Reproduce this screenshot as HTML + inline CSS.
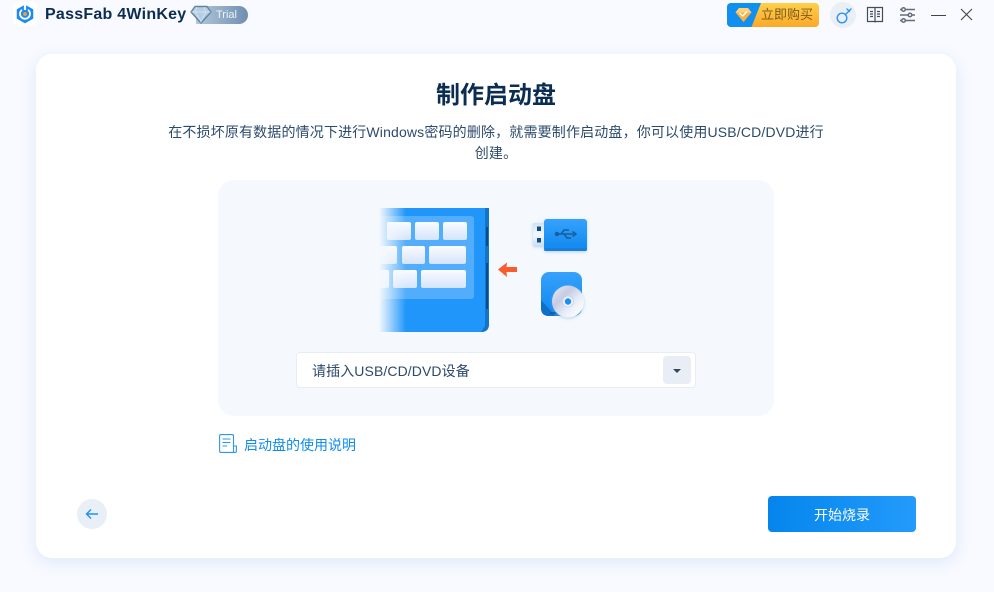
<!DOCTYPE html>
<html lang="zh"><head><meta charset="utf-8"><style>
*{box-sizing:border-box}html,body{margin:0;padding:0}
body{width:994px;height:592px;background:#f8faff;position:relative;overflow:hidden;font-family:"Liberation Sans","Noto Sans CJK SC",sans-serif}
.a{position:absolute;white-space:nowrap}
</style></head><body>
<svg class="a" style="left:13px;top:2px" width="24" height="24" viewBox="0 0 24 24"><rect x="0" y="0" width="24" height="24" rx="5" fill="#fff"/><path d="M12 3.500 19.500 7.800V16.200L12 20.500 4.500 16.200V7.800Z" fill="#1a8cf0" stroke="#1a8cf0" stroke-width="1.500" stroke-linejoin="round"/><path d="M9 7.800A5 5 0 1 0 15 7.800" fill="none" stroke="#fff" stroke-width="1.800"/><path d="M12 3V8" stroke="#fff" stroke-width="2.200"/><circle cx="12" cy="12" r="1.900" fill="#f7a132"/></svg>
<div class="a" style="left:45px;top:5px;font-size:16px;line-height:20px;font-weight:700;color:#0b2d52;letter-spacing:.25px">PassFab 4WinKey</div>
<div class="a" style="left:196px;top:6px;width:52px;height:18px;border-radius:0 9px 9px 0;background:linear-gradient(90deg,#b4c8da,#6f8fb0);color:#eef3f8;font-size:11px;line-height:19px;padding-left:20px">Trial</div>
<svg class="a" style="left:190px;top:5px" width="22" height="19" viewBox="0 0 22 19"><path d="M5 1.500H17L21 7 11 18 1 7Z" fill="#b5cee2" stroke="#5f83a5" stroke-width="1.400" stroke-linejoin="round"/><path d="M1.500 7H20.500M7 2 5.500 7 11 17 15.500 7 14 2" fill="none" stroke="#dbe8f2" stroke-width=".7"/></svg>

<div class="a" style="left:727px;top:3px;width:92px;height:24px;border-radius:4px;background:linear-gradient(180deg,#ffd04a,#fba928);overflow:hidden">
<div class="a" style="left:0;top:0;width:34px;height:24px;background:#0f8ff0;clip-path:polygon(0 0,100% 0,72% 100%,0 100%)"></div>
<div class="a" style="left:34px;top:0;font-size:13px;line-height:24px;color:#7a5a1c">立即购买</div>
<svg class="a" style="left:8px;top:4px" width="17" height="16" viewBox="0 0 17 16"><path d="M4 1H13L16.500 5.500 8.500 15 .5 5.500Z" fill="#ffb03a"/><path d="M4 1H13L16.500 5.500H.5Z" fill="#ffd27a"/><path d="M4.500 6 7.800 9 12 4.500" fill="none" stroke="#fff" stroke-width="1.500"/></svg>
</div>
<div class="a" style="left:830px;top:2px;width:26px;height:26px;border-radius:50%;background:#eaeff6"></div>
<svg class="a" style="left:830px;top:2px" width="26" height="26" viewBox="0 0 26 26" fill="none" stroke="#2a95f2" stroke-width="1.400"><circle cx="12" cy="16" r="4.800"/><path d="M15.500 12.500 21 7M17 7 19.500 9.500" stroke-linecap="round"/></svg>
<svg class="a" style="left:866px;top:6px" width="18" height="18" viewBox="0 0 18 18" fill="none" stroke="#444c58" stroke-width="1.200"><path d="M1.500 1.500H16.500V15.500H1.500ZM9 1.500V16.500M4 5.500H7M4 8H7M4 10.500H7M11 5.500H14M11 8H14M11 10.500H14"/></svg>
<svg class="a" style="left:898px;top:6px" width="18" height="18" viewBox="0 0 18 18" fill="none" stroke="#666d78" stroke-width="1.500"><path d="M2 3.500H17M2 9H17M2 14.500H17"/><circle cx="5.500" cy="3.500" r="1.800" fill="#f8faff"/><circle cx="12" cy="9" r="1.800" fill="#f8faff"/><circle cx="5.500" cy="14.500" r="1.800" fill="#f8faff"/></svg>
<div class="a" style="left:931px;top:15px;width:15px;height:1px;background:#444"></div>
<svg class="a" style="left:960px;top:8px" width="13" height="13" viewBox="0 0 13 13" stroke="#444" stroke-width="1.100"><path d="M1 1 12 12M12 1 1 12"/></svg>

<div class="a" style="left:36px;top:54px;width:920px;height:504px;background:#fff;border-radius:16px;box-shadow:0 4px 16px rgba(190,210,240,.45)"></div>
<div class="a" style="left:-1px;width:994px;top:79px;text-align:center;font-size:24px;line-height:34px;font-weight:700;color:#0b2d52">制作启动盘</div>
<div class="a" style="left:-2px;width:996px;top:122px;text-align:center;font-size:14px;line-height:21px;color:#2c4a6c;white-space:normal;letter-spacing:.16px">在不损坏原有数据的情况下进行Windows密码的删除，就需要制作启动盘，你可以使用USB/CD/DVD进行<br>创建。</div>

<div class="a" style="left:218px;top:180px;width:556px;height:236px;background:#f5f9fd;border-radius:16px"></div>
<svg class="a" style="left:370px;top:200px" width="230" height="140" viewBox="370 200 230 140">
<defs>
<linearGradient id="f" x1="0" x2="1" y1="0" y2="0"><stop offset="0" stop-color="#f5f9fd"/><stop offset=".15" stop-color="#f5f9fd"/><stop offset=".5" stop-color="#f5f9fd" stop-opacity=".6"/><stop offset="1" stop-color="#f5f9fd" stop-opacity="0"/></linearGradient>
<linearGradient id="k" x1="0" x2="0" y1="0" y2="1"><stop offset="0" stop-color="#fafcff"/><stop offset="1" stop-color="#d4e4fb"/></linearGradient>
<linearGradient id="b" x1="0" x2="0" y1="0" y2="1"><stop offset="0" stop-color="#36a2fc"/><stop offset="1" stop-color="#0f87ee"/></linearGradient>
<linearGradient id="u" x1="0" x2="0" y1="0" y2="1"><stop offset="0" stop-color="#cfe2f8"/><stop offset=".5" stop-color="#f2f7fd"/><stop offset="1" stop-color="#c9def6"/></linearGradient>
<linearGradient id="d" x1="0" x2="1" y1="0" y2="1"><stop offset="0" stop-color="#e8edf4"/><stop offset=".35" stop-color="#c6cbe4"/><stop offset=".6" stop-color="#e6ebf5"/><stop offset=".85" stop-color="#fbfcff"/><stop offset="1" stop-color="#c8d2e4"/></linearGradient>
<filter id="s" x="-20%" y="-20%" width="140%" height="140%"><feDropShadow dx="0" dy="1" stdDeviation="1.500" flood-color="#7faee0" flood-opacity=".55"/></filter>
</defs>
<path d="M376 208H489V324Q489 332 481 332H376Z" fill="#2096fb"/>
<path d="M485 208H489V324Q489 332 481 332L485 326Z" fill="#1475c8"/>
<rect x="486" y="227" width="2" height="19" fill="#0a4d8c"/><rect x="486" y="263" width="2" height="46" fill="#0a4d8c"/>
<rect x="376" y="216" width="98" height="83" rx="3" fill="#52aefc"/>
<g fill="url(#k)"><rect x="387" y="222" width="24" height="18" rx="2"/><rect x="415" y="222" width="24" height="18" rx="2"/><rect x="443" y="222" width="24" height="18" rx="2"/>
<rect x="376" y="246" width="21" height="18" rx="2"/><rect x="402" y="246" width="23" height="18" rx="2"/><rect x="429" y="246" width="37" height="18" rx="2"/>
<rect x="376" y="270" width="13" height="18" rx="2"/><rect x="393" y="270" width="24" height="18" rx="2"/><rect x="421" y="270" width="45" height="18" rx="2"/></g>
<rect x="374" y="206" width="32" height="128" fill="url(#f)"/>
<path d="M498 269.500 507 262.500 506.500 267H517V272H506.500L507 277Z" fill="#fb5c2e"/>
<g filter="url(#s)"><rect x="533" y="223" width="12" height="23" rx="1" fill="url(#u)"/><rect x="544" y="219" width="43" height="32" rx="3" fill="url(#b)"/></g>
<rect x="537" y="226.500" width="4" height="4.500" fill="#0f4e86"/><rect x="537" y="238" width="4" height="4.500" fill="#0f4e86"/>
<rect x="544" y="248" width="43" height="3" rx="1.500" fill="#1a7fd8"/>
<g fill="none" stroke="#14609f" stroke-width="1.500"><path d="M557 234H574M561 234 564 230H569M564 234 567 238H571"/><circle cx="557" cy="234" r="1.500" fill="#14609f"/><path d="M572.500 231.500 576 234 572.500 236.500"/></g>
<rect x="541" y="272" width="41" height="44" rx="8" fill="url(#b)"/><path d="M541 300V308Q541 316 549 316H556L548 308Z" fill="#0f6fc8"/><rect x="550" y="312" width="9" height="2" fill="#0c5da8"/>
<circle cx="568" cy="301.500" r="16" fill="url(#d)" filter="url(#s)"/><circle cx="568" cy="301.500" r="5.500" fill="#eef3fa" stroke="#c2d0e2" stroke-width=".7"/><circle cx="568" cy="301.500" r="3.200" fill="#1f8ef0"/>
</svg>

<div class="a" style="left:296px;top:352px;width:400px;height:36px;background:#fff;border:1px solid #e8edf4;border-radius:4px"></div>
<div class="a" style="left:312px;top:361px;font-size:14px;line-height:21px;color:#2c4a6c;letter-spacing:.1px">请插入USB/CD/DVD设备</div>
<div class="a" style="left:663px;top:356px;width:28px;height:28px;background:#e9edf5;border-radius:4px"></div>
<div class="a" style="left:673px;top:369px;border:4px solid transparent;border-top:4.500px solid #33475f;border-bottom:0"></div>

<svg class="a" style="left:219px;top:434px" width="18" height="19" viewBox="0 0 18 19" fill="none" stroke="#2a97f2" stroke-width="1.100"><path d="M14.500 12V2Q14.500 .6 13 .6H2Q.6 .6 .6 2V17Q.6 18.400 2 18.400H16Q17.400 18.400 17.400 17V12H14.500V18.400"/><path d="M3.500 5H11.500M3.500 8.500H11.500M3.500 12H8"/></svg>
<div class="a" style="left:244px;top:435px;font-size:14px;line-height:20px;color:#0f8ced">启动盘的使用说明</div>

<div class="a" style="left:77px;top:499px;width:30px;height:30px;border-radius:50%;background:#e9eff6"></div>
<svg class="a" style="left:77px;top:499px" width="30" height="30" viewBox="0 0 30 30" fill="none" stroke="#1f92f3" stroke-width="1.400"><path d="M9.500 15H21M14 10.500 9.500 15 14 19.500"/></svg>

<div class="a" style="left:768px;top:496px;width:148px;height:36px;border-radius:4px;background:linear-gradient(90deg,#0585ec,#229bfb);color:#fff;font-size:14px;line-height:38px;text-align:center">开始烧录</div>
</body></html>
